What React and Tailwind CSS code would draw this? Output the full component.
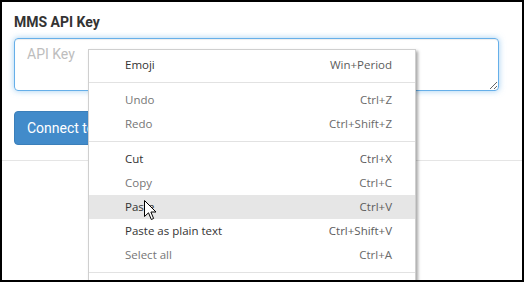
import React from "react";

const items = [
  { type: "item", label: "Emoji", sc: "Win+Period", on: true },
  { type: "sep" },
  { type: "item", label: "Undo", sc: "Ctrl+Z", on: false },
  { type: "item", label: "Redo", sc: "Ctrl+Shift+Z", on: false },
  { type: "sep" },
  { type: "item", label: "Cut", sc: "Ctrl+X", on: true },
  { type: "item", label: "Copy", sc: "Ctrl+C", on: false },
  { type: "item", label: "Paste", sc: "Ctrl+V", on: true, hl: true },
  { type: "item", label: "Paste as plain text", sc: "Ctrl+Shift+V", on: true },
  { type: "item", label: "Select all", sc: "Ctrl+A", on: false },
  { type: "sep" },
];

export default function App() {
  return (
    <div className="relative w-[524px] h-[282px] overflow-hidden border-2 border-black bg-white font-['Roboto',sans-serif]">
      <div className="pt-[10px] pb-[15px] pl-[12px] border-b border-[#e5e5e5]">
        <div className="text-[14px] leading-[20px] font-bold text-[#333] mb-[6px]">MMS API Key</div>
        <textarea
          placeholder="API Key"
          className="block w-[485px] h-[53px] rounded-[4px] border border-[#66afe9] px-[12px] py-[5px] text-[14px] leading-[20px] text-[#555] placeholder:text-[#bdbdbd] shadow-[inset_0_1px_1px_rgba(0,0,0,0.075),0_0_6px_rgba(102,175,233,0.6)] outline-none"
        />
        <button className="mt-[20px] h-[34px] rounded-[4px] bg-[#428bca] border border-[#3b7fba] px-[12px] text-[14px] leading-[20px] text-white">
          Connect to MMS
        </button>
      </div>

      <div className="absolute left-[86px] top-[47px] w-[328px] h-[260px] bg-white border border-[#cfcfcf] pt-[3px] shadow-[2px_2px_3px_rgba(0,0,0,0.35)] font-['Open_Sans',sans-serif] text-[11.5px]">
        {items.map((it, i) =>
          it.type === "sep" ? (
            <div key={i} className="my-[5px] h-px bg-[#e2e2e2]" />
          ) : (
            <div
              key={i}
              className={
                "flex items-center justify-between h-[24px] pl-[36px] pr-[23px] " +
                (it.hl ? "bg-[#e6e6e6]" : "")
              }
            >
              <span className={it.on ? "text-[#333]" : "text-[#767676]"}>{it.label}</span>
              <span className={it.on ? "text-[#5c5c5c]" : "text-[#6a6a6a]"}>{it.sc}</span>
            </div>
          )
        )}
      </div>

      <svg className="absolute left-[142px] top-[198px]" width="14" height="21" viewBox="0 0 14 21">
        <path
          d="M0.5 0.5 L0.5 16.5 L4.5 12.8 L7.3 19.5 L9.6 18.5 L6.9 12 L12 12 Z"
          fill="white"
          stroke="black"
          strokeWidth="1"
          strokeLinejoin="miter"
        />
      </svg>
    </div>
  );
}
